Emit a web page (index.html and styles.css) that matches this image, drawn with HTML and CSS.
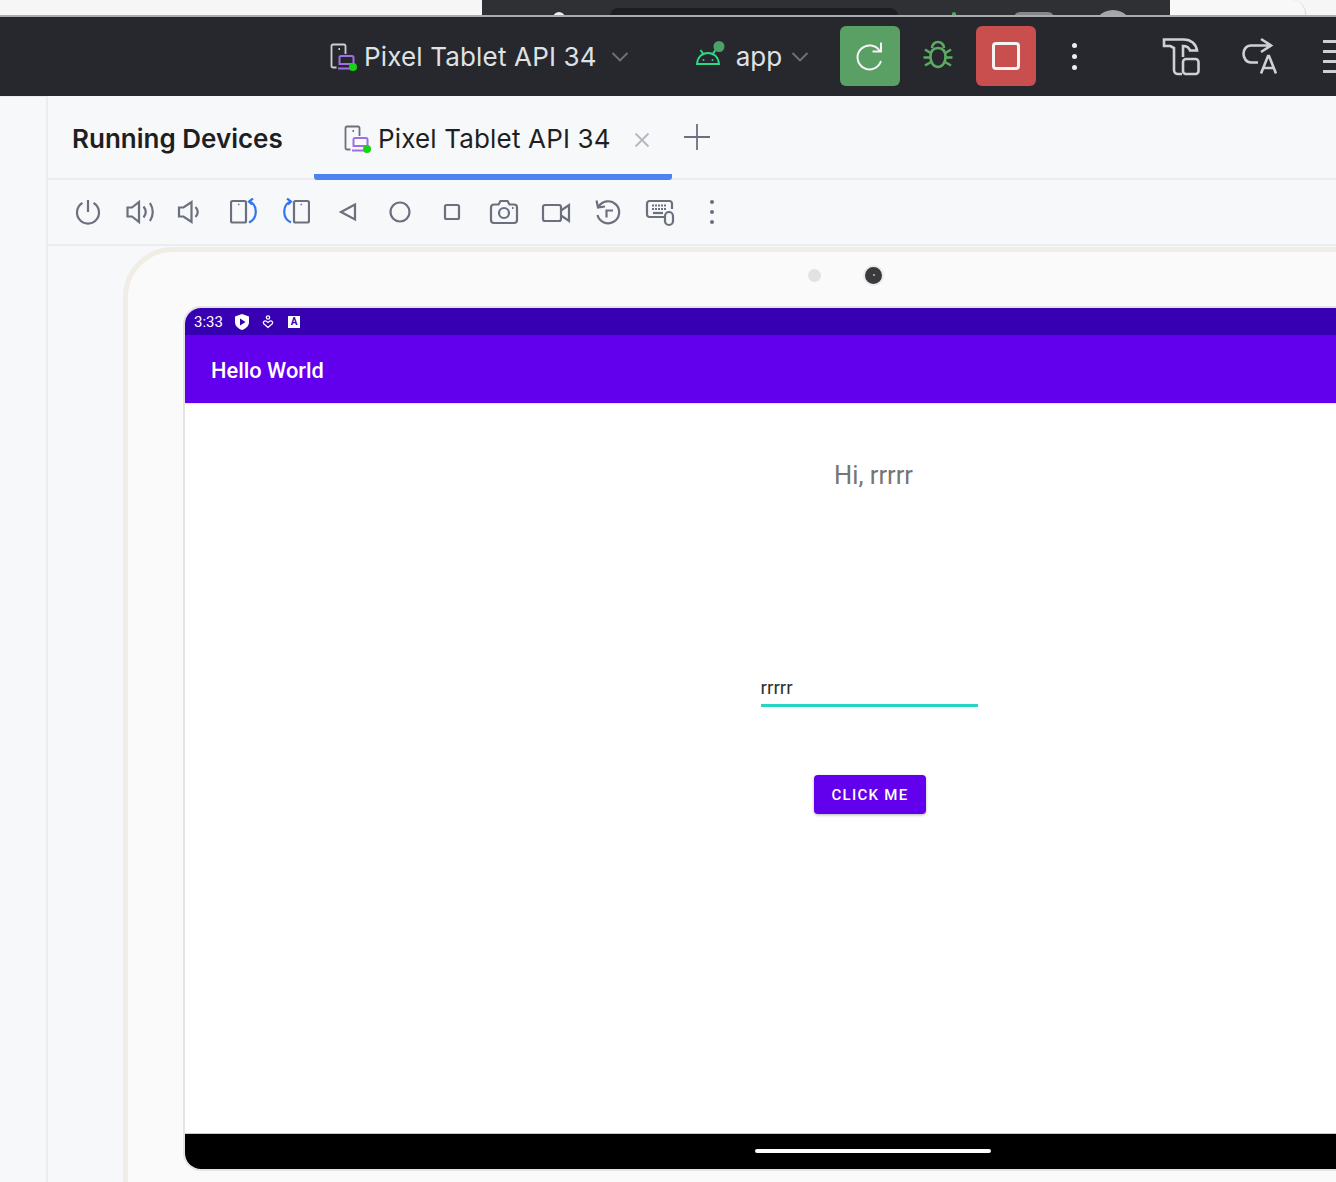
FILE: index.html
```html
<!DOCTYPE html>
<html lang="en">
<head>
    <meta charset="UTF-8">
    <title>Running Devices</title>
    <link rel="stylesheet" href="styles.css">
</head>
<body>

    <svg class="defs" width="0" height="0">
        <symbol id="device" viewBox="0 0 30 30">
            <path d="M6.500 24.500H3a1.500 1.500 0 0 1-1.500-1.500V3A1.500 1.500 0 0 1 3 1.500h11A1.500 1.500 0 0 1 15.500 3v8M8.500 6h1.500" fill="none" stroke="currentColor" stroke-width="1.800"/>
            <path d="M9.500 14.500a1.500 1.500 0 0 1 1.500-1.500h11a1.500 1.500 0 0 1 1.500 1.500v6.500h-14zM8 25.500h15" fill="none" stroke="#a06fe8" stroke-width="2"/>
            <circle cx="23" cy="24" r="4" fill="#17d317"/>
        </symbol>
        <symbol id="rotate" viewBox="0 0 28 28">
            <rect x="1" y="3" width="15" height="21.500" rx="1.500" fill="none" stroke="#6c707e" stroke-width="2.200"/>
            <path d="M8 6.500h1.500" stroke="#6c707e" stroke-width="1.500"/>
            <path d="M19 3.500c8.500 2.500 9.500 16.500 0 21M23 .5 19 3.500l3 3" fill="none" stroke="#3574f0" stroke-width="2.200"/>
        </symbol>
    </svg>

    <div class="top-strip">
        <div class="strip-white"></div>
        <div class="dark-window">
            <span class="bump bump-dot"></span>
            <span class="dark-tab"></span>
            <span class="bump bump-green"></span>
            <span class="bump bump-pill"></span>
            <span class="bump bump-round"></span>
        </div>
        <div class="strip-right"></div>
    </div>

    <header class="toolbar">
        <svg class="tb-device" width="30" height="30"><use href="#device"/></svg>
        <span class="tb-label">Pixel Tablet API 34</span>
        <svg class="tb-chevron" width="18" height="10" viewBox="0 0 18 10"><path d="M1.500 1 9 8.500 16.500 1" fill="none" stroke="#6f737a" stroke-width="1.800"/></svg>
        <svg class="tb-android" width="30" height="30" viewBox="0 0 30 30">
            <path d="M2 24c.5-7 5-11 11-11s10.500 4 11 11zM5.500 10l3.500 5M20.500 10 17 15" fill="none" stroke="#2fd683" stroke-width="2"/>
            <circle cx="8.500" cy="20" r="1" fill="#2fd683"/>
            <circle cx="17.500" cy="20" r="1" fill="#2fd683"/>
            <circle cx="24" cy="6.500" r="5.500" fill="#4f9f68"/>
        </svg>
        <span class="tb-label tb-app">app</span>
        <svg class="tb-chevron tb-chevron-app" width="18" height="10" viewBox="0 0 18 10"><path d="M1.500 1 9 8.500 16.500 1" fill="none" stroke="#6f737a" stroke-width="1.800"/></svg>

        <button class="tb-btn tb-green">
            <svg width="30" height="30" viewBox="0 0 30 30"><path d="M25 10.500A12 12 0 1 0 26 20M17.500 10.500H26V1.500" fill="none" stroke="#f4f4f4" stroke-width="2"/></svg>
        </button>
        <svg class="tb-bug" width="34" height="34" viewBox="0 0 34 34">
            <path d="M11 9a6 6 0 0 1 12 0M17 9c-5 0-7.500 3.500-7.500 9s3 10 7.500 10 7.500-4.500 7.500-10-2.500-9-7.500-9zM9.500 14 4 10.500M24.500 14 30 10.500M9 18.500H2.500M25 18.500h6.500M10 23l-6 3.500M24 23l6 3.500" fill="none" stroke="#5cab62" stroke-width="2.600"/>
        </svg>
        <button class="tb-btn tb-red"><span class="stop-mark"></span></button>
        <span class="tb-more"><i></i><i></i><i></i></span>
        <svg class="tb-hammer" width="40" height="40" viewBox="0 0 40 40">
            <path d="M22 20V9c3 0 6 1.500 7 4.500h7C35 7 30 2.500 23 2.500H3V9h6.500l3.500 2v22c0 2.500 2 4 4 4h4" fill="none" stroke="#ced0d6" stroke-width="2.600"/>
            <rect x="22" y="22" width="15.500" height="15" rx="3" fill="none" stroke="#ced0d6" stroke-width="2.600"/>
        </svg>
        <svg class="tb-translate" width="38" height="40" viewBox="0 0 38 40">
            <path d="M32 8.500H12C2 8.500 2 25 12 25.500h7M22 2l10 6.500L22 15" fill="none" stroke="#ced0d6" stroke-width="2.600"/>
            <path d="M22 36.500 29 19h1l7 17.500M24.500 31h10" fill="none" stroke="#ced0d6" stroke-width="2.600"/>
        </svg>
        <span class="tb-lines"><i></i><i></i><i></i><i></i></span>
    </header>

    <div class="workspace">
        <aside class="side-strip"></aside>

        <main class="panel">
            <div class="tabs-row">
                <h2 class="panel-title">Running Devices</h2>
                <div class="tab">
                    <svg class="tab-icon" width="30" height="30"><use href="#device"/></svg>
                    <span class="tab-label">Pixel Tablet API 34</span>
                    <svg class="tab-close" width="16" height="16" viewBox="0 0 16 16"><path d="M1.500 1.500l13 13M14.500 1.500l-13 13" stroke="#b4b8bf" stroke-width="1.800"/></svg>
                </div>
                <svg class="tab-add" width="28" height="28" viewBox="0 0 28 28"><path d="M14 1v26M1 14h26" stroke="#6c707e" stroke-width="1.800"/></svg>
            </div>

            <div class="actions">
                <span class="act"><svg viewBox="0 0 28 28"><path d="M8.500 5A11 11 0 1 0 19.500 5M14 2v12"/></svg></span>
                <span class="act"><svg viewBox="0 0 28 28"><path d="M1.500 9.500H6L13 4v20l-7-5.500H1.500zM17.500 8.500Q22 14 17.500 19.500M24 5q5.500 9 0 18"/></svg></span>
                <span class="act"><svg viewBox="0 0 28 28"><path d="M1 9.500h4.500L13.500 4v20l-8-5.500H1zM17.500 9Q22 14 17.500 19"/></svg></span>
                <span class="act"><svg class="no-style" viewBox="0 0 28 28"><use href="#rotate"/></svg></span>
                <span class="act"><svg class="no-style flip" viewBox="0 0 28 28"><use href="#rotate"/></svg></span>
                <span class="act"><svg viewBox="0 0 28 28"><path d="M21 6.500 7 14l14 7.500z"/></svg></span>
                <span class="act"><svg viewBox="0 0 28 28"><circle cx="14" cy="14" r="9.500"/></svg></span>
                <span class="act"><svg viewBox="0 0 28 28"><rect x="7" y="7" width="14" height="14" rx="1.500"/></svg></span>
                <span class="act"><svg viewBox="0 0 28 28"><path d="M8.500 6.500 10.500 3h7l2 3.500H24a3 3 0 0 1 3 3V22a3 3 0 0 1-3 3H4a3 3 0 0 1-3-3V9.500a3 3 0 0 1 3-3z"/><circle cx="14" cy="15" r="5"/><path d="M22 10h1.500"/></svg></span>
                <span class="act"><svg viewBox="0 0 28 28"><rect x="1" y="7" width="18" height="16" rx="2"/><path d="M19 12.500 27 7v16l-8-5.500"/></svg></span>
                <span class="act"><svg viewBox="0 0 28 28"><path d="M4.500 9a11 11 0 1 1-1 8M2.500 2.500 4 9.500l7-1M12.500 19.500V12.500H19"/></svg></span>
                <span class="act"><svg viewBox="0 0 28 28"><path d="M18 19H3.500A2.500 2.500 0 0 1 1 16.500v-11A2.500 2.500 0 0 1 3.500 3h20A2.500 2.500 0 0 1 26 5.500V11"/><path class="keys" d="M6 7.500h15M6 11h15"/><path d="M7 15h10"/><rect x="19" y="14" width="8" height="13" rx="4"/></svg></span>
                <span class="act act-more"><i></i><i></i><i></i></span>
            </div>

            <div class="device-area">
                <div class="tablet">
                    <div class="tablet-bezel">
                        <span class="sensor"></span>
                        <span class="camera"><i></i></span>
                    </div>
                    <div class="screen">
                        <div class="status-bar">
                            <span class="clock">3:33</span>
                            <svg class="st-shield" width="14" height="16" viewBox="0 0 14 16"><path d="M7 0 14 2.500V8c0 4-3 6.500-7 8-4-1.500-7-4-7-8V2.500z" fill="#fff"/><path d="M5 4.500 10.500 8 5 11.500z" fill="#3700b3"/></svg>
                            <svg class="st-person" width="12" height="14" viewBox="0 0 12 14"><circle cx="6" cy="2.500" r="1.700" fill="none" stroke="#fff" stroke-width="1.200"/><path d="M6 12.500 1.500 8.500c-.8-1.500.8-3 2.500-2.500L6 7.500 8 6c1.700-.5 3.300 1 2.500 2.500z" fill="none" stroke="#fff" stroke-width="1.200"/></svg>
                            <span class="st-a">A</span>
                        </div>
                        <div class="app-bar">Hello World</div>
                        <div class="app-content">
                            <p class="greeting">Hi, rrrrr</p>
                            <div class="text-field">rrrrr</div>
                            <button class="click-btn">CLICK ME</button>
                        </div>
                        <div class="nav-bar"><span class="home-handle"></span></div>
                    </div>
                </div>
            </div>
        </main>
    </div>

</body>
</html>
```

FILE: styles.css
```css
* {
    box-sizing: border-box;
}
html, body {
    margin: 0;
    height: 1182px;
    overflow: hidden;
}
body {
    width: 1336px;
    font-family: Inter, "Noto Sans", sans-serif;
    background-color: #f7f8fa;
    display: flex;
    flex-direction: column;
}
.defs {
    position: absolute;
}

/* strip of the desktop behind the IDE */
.top-strip {
    height: 17px;
    flex: none;
    display: flex;
    background-color: #f6f6f6;
    border-bottom: 2px solid #a9abaf;
}
.strip-white {
    width: 482px;
}
.dark-window {
    width: 688px;
    position: relative;
    overflow: hidden;
    background-color: #2f3034;
}
.dark-tab {
    position: absolute;
    left: 128px;
    top: 8px;
    width: 288px;
    height: 20px;
    border-radius: 8px;
    background-color: #1d1e21;
}
.bump {
    position: absolute;
}
.bump-dot {
    left: 71px;
    top: 12px;
    width: 12px;
    height: 12px;
    border-radius: 50%;
    background-color: #ededed;
}
.bump-green {
    left: 470px;
    top: 12px;
    width: 4px;
    height: 6px;
    border-radius: 2px;
    background-color: #57a265;
}
.bump-pill {
    left: 532px;
    top: 12px;
    width: 40px;
    height: 12px;
    border-radius: 6px 6px 0 0;
    background-color: #85878b;
}
.bump-round {
    left: 611px;
    top: 10px;
    width: 40px;
    height: 40px;
    border-radius: 50%;
    background-color: #a4a6a9;
}
.strip-right {
    flex: 1;
    background-color: #f8f8f8;
    position: relative;
    border-right: 1px solid #d9d9d9;
    margin-right: 30px;
    border-top-right-radius: 14px;
}

/* main IDE toolbar */
.toolbar {
    height: 79px;
    flex: none;
    display: flex;
    align-items: center;
    background-color: #27282d;
    padding-left: 330px;
    color: #dfe1e5;
}
.tb-device {
    flex: none;
    color: #ced0d6;
    margin-top: 3px;
}
.tb-label {
    font-size: 26px;
    line-height: 30px;
    letter-spacing: 0.16px;
    margin-left: 4px;
    white-space: nowrap;
}
.tb-chevron {
    flex: none;
    margin-left: 14px;
}
.tb-android {
    flex: none;
    margin-left: 66px;
    margin-top: -3px;
}
.tb-app {
    margin-left: 11px;
    letter-spacing: 0;
}
.tb-chevron-app {
    margin-left: 9px;
}
.tb-btn {
    flex: none;
    width: 60px;
    height: 60px;
    margin-bottom: 2px;
    padding: 0;
    border: 0;
    border-radius: 6px;
    display: flex;
    align-items: center;
    justify-content: center;
}
.tb-green {
    margin-left: 31px;
    background-color: #5a9f63;
}
.tb-red {
    background-color: #c94f4f;
}
.tb-bug {
    flex: none;
    margin: 0 21px 1px;
}
.stop-mark {
    width: 28px;
    height: 28px;
    border: 3px solid #f4f4f4;
    border-radius: 4px;
}
.tb-more {
    margin-left: 36px;
    margin-bottom: 1px;
    display: flex;
    flex-direction: column;
    gap: 6px;
}
.tb-more i {
    width: 5px;
    height: 5px;
    border-radius: 50%;
    background-color: #eceef0;
}
.tb-hammer {
    flex: none;
    margin-left: 84px;
}
.tb-translate {
    flex: none;
    margin-left: 38px;
}
.tb-lines {
    flex: none;
    margin-left: 46px;
    width: 20px;
    display: flex;
    flex-direction: column;
    gap: 7px;
}
.tb-lines i {
    height: 3px;
    background-color: #ced0d6;
}

.workspace {
    flex: 1;
    display: flex;
    min-height: 0;
}
.side-strip {
    width: 48px;
    flex: none;
    background-color: #f7f8fa;
    border-right: 2px solid #ebecf0;
    border-top: 1px solid #ebecf0;
}
.panel {
    flex: 1;
    min-width: 0;
    display: flex;
    flex-direction: column;
}

/* tab row */
.tabs-row {
    height: 84px;
    flex: none;
    display: flex;
    background-color: #f7f8fa;
    border-bottom: 2px solid #ebecf0;
    padding-left: 24px;
}
.panel-title {
    margin: 27px 0 0;
    width: 242px;
    font-size: 26px;
    line-height: 32px;
    font-weight: 600;
    color: #1e1f22;
}
.tab {
    width: 358px;
    height: 84px;
    display: flex;
    align-items: flex-start;
    border-bottom: 6px solid #4e83ef;
    border-radius: 0 0 3px 3px;
    padding-left: 30px;
}
.tab-icon {
    flex: none;
    margin-top: 29px;
    color: #6c707e;
}
.tab-label {
    margin: 28px 0 0 4px;
    font-size: 26px;
    line-height: 30px;
    letter-spacing: 0.16px;
    color: #1e1f22;
    white-space: nowrap;
}
.tab-close {
    flex: none;
    margin: 36px 0 0 23px;
}
.tab-add {
    flex: none;
    margin: 27px 0 0 11px;
}

/* emulator actions */
.actions {
    height: 66px;
    flex: none;
    display: flex;
    padding-left: 14px;
    border-bottom: 2px solid #ebecf0;
}
.act {
    width: 52px;
    height: 64px;
    display: flex;
    align-items: center;
    justify-content: center;
}
.act svg {
    width: 28px;
    height: 28px;
    fill: none;
    stroke: #6c707e;
    stroke-width: 2.200;
    overflow: visible;
}
.act .no-style {
    stroke: none;
}
.act .flip {
    transform: scaleX(-1);
}
.act .keys {
    stroke-width: 2;
    stroke-dasharray: 2 1;
}
.act-more {
    flex-direction: column;
    gap: 6px;
}
.act-more i {
    width: 4px;
    height: 4px;
    border-radius: 50%;
    background-color: #6c707e;
}

/* device */
.device-area {
    flex: 1;
    min-height: 0;
    overflow: hidden;
    padding: 1px 0 0 75px;
}
.tablet {
    width: 1500px;
    height: 990px;
    background-color: #fafafa;
    border: 5px solid #f0ede6;
    border-radius: 50px;
    padding: 0 0 0 55px;
}
.tablet-bezel {
    height: 54px;
    display: flex;
    align-items: center;
    padding: 0 0 8px 625px;
}
.sensor {
    width: 13px;
    height: 13px;
    border-radius: 50%;
    background-color: #e2e2e2;
}
.camera {
    width: 21px;
    height: 21px;
    margin-left: 42px;
    border-radius: 50%;
    border: 2px solid #ebebeb;
    background-color: #3a3a3c;
    display: flex;
    align-items: center;
    justify-content: center;
}
.camera i {
    width: 2px;
    height: 2px;
    background-color: #9a9ab0;
}
.screen {
    width: 1381px;
    height: 865px;
    border: 2px solid #e4e4e4;
    border-radius: 18px;
    overflow: hidden;
    display: flex;
    flex-direction: column;
    font-family: Roboto, sans-serif;
    background-color: #fff;
}
.status-bar {
    height: 27px;
    flex: none;
    display: flex;
    align-items: center;
    padding-left: 9px;
    background-color: #3700b3;
    color: #fff;
}
.clock {
    font-size: 15px;
    width: 41px;
}
.st-shield {
    flex: none;
}
.st-person {
    flex: none;
    margin-left: 13px;
}
.st-a {
    width: 12px;
    height: 12px;
    margin-left: 14px;
    background-color: #fff;
    color: #3700b3;
    font-size: 10px;
    line-height: 12px;
    font-weight: 700;
    text-align: center;
}
.app-bar {
    height: 69px;
    flex: none;
    padding: 22px 0 0 26px;
    font-size: 21.800px;
    line-height: 28px;
    font-weight: 500;
    color: #fff;
    background-color: #6200ee;
    border-bottom: 1px solid #e8e2f4;
}
.app-content {
    flex: 1;
    display: flex;
    flex-direction: column;
    align-items: center;
}
.greeting {
    margin: 56px 0 0;
    font-size: 25.500px;
    line-height: 30px;
    color: #757575;
}
.text-field {
    width: 217px;
    height: 31px;
    margin: 186px 9px 0 0;
    border-bottom: 3px solid #26d6c5;
    font-size: 19px;
    line-height: 24px;
    color: #333;
}
.click-btn {
    width: 112px;
    height: 39px;
    margin: 68px 7px 0 0;
    padding: 1px 0 0;
    border: 0;
    border-radius: 4px;
    background-color: #6200ee;
    color: #fff;
    font-family: Roboto, sans-serif;
    font-size: 15px;
    font-weight: 500;
    letter-spacing: 1.300px;
    box-shadow: 0 1px 3px rgba(0, 0, 0, 0.3);
}
.nav-bar {
    height: 36px;
    flex: none;
    display: flex;
    justify-content: center;
    padding: 15px 2px 0 0;
    background-color: #000;
    border-top: 1px solid #c8c8c8;
}
.home-handle {
    width: 236px;
    height: 4px;
    border-radius: 2px;
    background-color: #fff;
}
```
